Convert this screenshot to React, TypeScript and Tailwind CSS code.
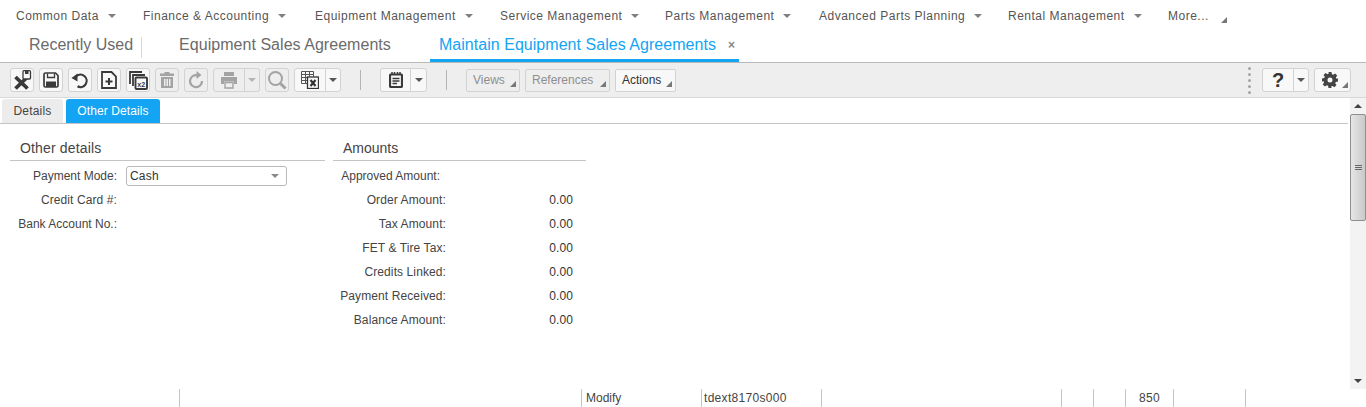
import React from "react";

const navItems = [
  { label: "Common Data", width: "w-[127px]" },
  { label: "Finance & Accounting", width: "w-[172px]" },
  { label: "Equipment Management", width: "w-[185px]" },
  { label: "Service Management", width: "w-[165px]" },
  { label: "Parts Management", width: "w-[154px]" },
  { label: "Advanced Parts Planning", width: "w-[189px]" },
  { label: "Rental Management", width: "w-[160px]" },
];

const amounts = [
  { label: "Order Amount:", value: "0.00" },
  { label: "Tax Amount:", value: "0.00" },
  { label: "FET & Tire Tax:", value: "0.00" },
  { label: "Credits Linked:", value: "0.00" },
  { label: "Payment Received:", value: "0.00" },
  { label: "Balance Amount:", value: "0.00" },
];

function Caret({ className = "border-t-[#8a8a8a]" }: { className?: string }) {
  return (
    <span
      className={`inline-block h-0 w-0 border-x-[4px] border-t-[4px] border-x-transparent ${className}`}
    />
  );
}

function Corner() {
  return (
    <svg width="6" height="6" viewBox="0 0 6 6" className="absolute bottom-[4px] right-[3px]">
      <path d="M6 0V6H0Z" fill="#777" />
    </svg>
  );
}

function ToolButton({
  children,
  disabled,
  width = "w-[24px]",
}: {
  children: React.ReactNode;
  disabled?: boolean;
  width?: string;
}) {
  return (
    <div
      className={`flex h-[24px] ${width} items-center justify-center rounded-[3px] border border-[#d2d2d2] ${
        disabled ? "bg-[#eeeeee] text-[#a3a3a3]" : "bg-[#f8f8f8] text-[#3a3a3a]"
      }`}
    >
      {children}
    </div>
  );
}

function SplitButton({
  children,
  disabled,
  mainWidth,
  width,
}: {
  children: React.ReactNode;
  disabled?: boolean;
  mainWidth: string;
  width: string;
}) {
  return (
    <div
      className={`flex h-[24px] ${width} rounded-[3px] border border-[#d2d2d2] ${
        disabled ? "bg-[#eeeeee] text-[#a3a3a3]" : "bg-[#f8f8f8] text-[#3a3a3a]"
      }`}
    >
      <div className={`flex ${mainWidth} items-center justify-center border-r border-[#d2d2d2]`}>
        {children}
      </div>
      <div className="flex flex-1 items-center justify-center">
        <Caret className={disabled ? "border-t-[#b4b4b4]" : "border-t-[#555555]"} />
      </div>
    </div>
  );
}

function MenuButton({
  label,
  width,
  disabled,
}: {
  label: string;
  width: string;
  disabled?: boolean;
}) {
  return (
    <div
      className={`relative flex h-[23px] ${width} items-center rounded-[2px] border border-[#d2d2d2] pl-[6px] text-[12px] ${
        disabled ? "bg-[#eeeeee] text-[#8e8e8e]" : "bg-[#f8f8f8] text-[#333333]"
      }`}
    >
      {label}
      <Corner />
    </div>
  );
}

function Row({ label, value }: { label: string; value: string }) {
  return (
    <div className="flex h-[24px] items-center text-[12px] tracking-[0.1px] text-[#444444]">
      <span className="w-[113px] text-right">{label}</span>
      <span className="w-[127px] text-right text-[#333333]">{value}</span>
    </div>
  );
}

function CloseSaveIcon() {
  return (
    <svg width="20" height="20" viewBox="0 0 20 20" fill="none">
      <path d="M3.500 7 15.500 18.500M15.500 7 3.500 18.500" stroke="currentColor" strokeWidth="3.800" />
      <rect x="11" y="0.700" width="7.500" height="8.300" rx="1" fill="#f8f8f8" stroke="currentColor" strokeWidth="1.300" />
      <path d="M13 1h3.500v3H13z" fill="currentColor" />
    </svg>
  );
}

function SaveIcon() {
  return (
    <svg width="16" height="16" viewBox="0 0 16 16" fill="none" stroke="currentColor">
      <path d="M2.500 1h10L15 3.500V13.500a1.500 1.500 0 0 1-1.500 1.500h-11A1.500 1.500 0 0 1 1 13.500v-11A1.500 1.500 0 0 1 2.500 1z" strokeWidth="1.700" />
      <path d="M4.500 1.500v4h7v-4" strokeWidth="1.300" />
      <path d="M3 9.500h10V15H3z" fill="currentColor" stroke="none" />
    </svg>
  );
}

function UndoIcon() {
  return (
    <svg width="18" height="18" viewBox="0 0 18 18" fill="none">
      <path d="M5 5.500a6.200 6.200 0 1 1 1.500 9.800" stroke="currentColor" strokeWidth="2.200" />
      <path d="M.5 7 6.500 2.500v8z" fill="currentColor" />
    </svg>
  );
}

function RedoIcon() {
  return (
    <svg width="18" height="18" viewBox="0 0 18 18" fill="none">
      <path d="M11 4.500A6 6 0 1 0 15 10" stroke="currentColor" strokeWidth="2.200" />
      <path d="M9.500 0v8l5-4z" fill="currentColor" />
    </svg>
  );
}

function NewIcon() {
  return (
    <svg width="16" height="18" viewBox="0 0 16 18" fill="none">
      <path d="M1 1h9.500L15 5.500V17H1z" stroke="currentColor" strokeWidth="1.800" />
      <path d="M7 7h2v2.500h2.500v2H9V14H7v-2.500H4.500v-2H7z" fill="currentColor" />
    </svg>
  );
}

function CopyIcon() {
  return (
    <svg width="19" height="19" viewBox="0 0 19 19" fill="none">
      <path d="M1 13V1H13" stroke="currentColor" strokeWidth="1.800" />
      <path d="M4 15V4H16" stroke="currentColor" strokeWidth="1.800" />
      <rect x="6.500" y="6.500" width="11.500" height="11.500" rx="1" stroke="currentColor" strokeWidth="1.900" />
      <text x="8.300" y="15.500" fontSize="7" fontWeight="700" fill="currentColor" fontFamily="Liberation Sans, sans-serif">
        x2
      </text>
    </svg>
  );
}

function TrashIcon() {
  return (
    <svg width="16" height="18" viewBox="0 0 16 18" fill="currentColor">
      <path d="M5.500 1h5v1.500H15V5H1V2.500h4.500z" />
      <path d="M2 6h12v11H2zM5 8v7h1.500V8zM7.500 8v7h1.500V8zM10 8v7h1.500V8z" fillRule="evenodd" />
    </svg>
  );
}

function PrintIcon() {
  return (
    <svg width="18" height="18" viewBox="0 0 18 18" fill="currentColor">
      <path d="M4 1h10v4H4z" />
      <path d="M1 6h16v7h-3v-2.500H4V13H1z" />
      <path d="M5 11.500h8V17H5z" fill="none" stroke="currentColor" strokeWidth="1.400" />
    </svg>
  );
}

function SearchIcon() {
  return (
    <svg width="20" height="20" viewBox="0 0 20 20" fill="none" stroke="currentColor">
      <circle cx="8.500" cy="8.500" r="6.500" strokeWidth="2" />
      <path d="M13.500 13.500 18.500 18.500" strokeWidth="3" />
    </svg>
  );
}

function ExcelIcon() {
  return (
    <svg width="18" height="18" viewBox="0 0 18 18" fill="none">
      <path
        d="M.5.500h12M.5 3.500h12M.5 6.500h6M.5 9.500h6M.5 12.500h6M.5.500v12M4.500.500v12M8.500.500v5M12.500.500v5"
        stroke="#555555"
        strokeWidth="1"
      />
      <rect x="6.500" y="6" width="11" height="11.500" fill="#f8f8f8" stroke="#333333" strokeWidth="1.300" />
      <path d="M9.500 9 14.500 15M14.500 9 9.500 15" stroke="#333333" strokeWidth="2.200" />
    </svg>
  );
}

function NotepadIcon() {
  return (
    <svg width="14" height="16" viewBox="0 0 14 16" fill="none">
      <rect x="1" y="2.500" width="12" height="12.500" rx="1" stroke="currentColor" strokeWidth="2.200" />
      <path d="M3 0v3M5.500 0v3M8.500 0v3M11 0v3" stroke="currentColor" strokeWidth="1.500" />
      <path d="M3.500 6.500h7M3.500 9h7M3.500 11.500h4.500" stroke="currentColor" strokeWidth="1.300" />
    </svg>
  );
}

function GearIcon() {
  return (
    <svg width="16" height="16" viewBox="0 0 16 16" fill="#444444">
      <path
        fillRule="evenodd"
        d="M6.500 0h3l.4 2.200 1.300.6L13.100 1.500l2.100 2.100-1.300 1.900.6 1.300L16 6.500v3l-2.200.4-.6 1.300 1.300 1.900-2.100 2.100-1.900-1.300-1.300.6L9.500 16h-3l-.4-2.200-1.300-.6-1.900 1.300L.8 12.400l1.300-1.900-.6-1.300L0 9.500v-3l2.200-.4.6-1.300L1.500 3 3.600.9l1.900 1.300 1.300-.6zM8 5.500a2.500 2.500 0 1 0 0 5 2.500 2.500 0 0 0 0-5z"
      />
    </svg>
  );
}

export default function App() {
  return (
    <div className="flex h-[407px] w-[1366px] flex-col overflow-hidden bg-white font-['Liberation_Sans',Arial,sans-serif]">
      {/* Main menu */}
      <div className="flex h-[32px] shrink-0 items-center pl-[16px] text-[12px] tracking-[0.5px] text-[#555555]">
        {navItems.map((item) => (
          <div key={item.label} className={`flex ${item.width} items-center`}>
            <span>{item.label}</span>
            <Caret className="ml-[9px] border-t-[#808080]" />
          </div>
        ))}
        <div className="relative w-[60px]">
          More...
          <svg width="6" height="6" viewBox="0 0 6 6" className="absolute bottom-[2px] right-[1px]">
            <path d="M6 0V6H0Z" fill="#777" />
          </svg>
        </div>
      </div>

      {/* Page tabs */}
      <div className="flex h-[30px] shrink-0 items-start pl-[29px] text-[16px] text-[#6b6b6b]">
        <span className="flex h-[26px] items-center">Recently Used</span>
        <span className="ml-[8px] mt-[5px] h-[21px] w-px bg-[#d8d8d8]" />
        <span className="ml-[37px] flex h-[26px] items-center tracking-[0.04px]">Equipment Sales Agreements</span>
        <div className="ml-[39px] flex h-[30px] w-[309px] items-start border-b-[3px] border-[#13a4f3] pl-[9px] text-[#13a4f3]">
          <span className="flex h-[26px] items-center tracking-[0.04px]">Maintain Equipment Sales Agreements</span>
          <span className="ml-[12px] flex h-[26px] items-center text-[12px] font-bold leading-none text-[#888888]">×</span>
        </div>
      </div>

      {/* Toolbar */}
      <div className="flex h-[36px] shrink-0 items-center border-y border-t-[#b9b9b9] border-b-[#d8d8d8] bg-[#eeeeee] pl-[10px] pr-[15px]">
        <div className="flex items-center gap-[5px]">
          <ToolButton><CloseSaveIcon /></ToolButton>
          <ToolButton><SaveIcon /></ToolButton>
          <ToolButton><UndoIcon /></ToolButton>
          <ToolButton><NewIcon /></ToolButton>
          <ToolButton><CopyIcon /></ToolButton>
          <ToolButton disabled><TrashIcon /></ToolButton>
          <ToolButton disabled><RedoIcon /></ToolButton>
          <SplitButton disabled width="w-[47px]" mainWidth="w-[31px]"><PrintIcon /></SplitButton>
          <ToolButton disabled><SearchIcon /></ToolButton>
          <SplitButton width="w-[47px]" mainWidth="w-[31px]"><ExcelIcon /></SplitButton>
        </div>
        <span className="ml-[19px] h-[20px] w-px bg-[#b5b5b5]" />
        <div className="ml-[19px]">
          <SplitButton width="w-[47px]" mainWidth="w-[30px]"><NotepadIcon /></SplitButton>
        </div>
        <span className="ml-[19px] h-[20px] w-px bg-[#b5b5b5]" />
        <div className="ml-[19px] flex items-center gap-[5px]">
          <MenuButton disabled label="Views" width="w-[54px]" />
          <MenuButton disabled label="References" width="w-[85px]" />
          <MenuButton label="Actions" width="w-[61px]" />
        </div>
        <div className="ml-auto flex items-center">
          <div className="flex flex-col gap-[3px]">
            {[0, 1, 2, 3, 4].map((n) => (
              <span key={n} className="h-[3px] w-[3px] rounded-full bg-[#a5a5a5]" />
            ))}
          </div>
          <div className="ml-[11px]">
            <SplitButton width="w-[47px]" mainWidth="w-[31px]">
              <span className="text-[20px] font-bold leading-none text-[#333333]">?</span>
            </SplitButton>
          </div>
          <div className="relative ml-[5px]">
            <ToolButton width="w-[37px]">
              <span className="mr-[6px] flex"><GearIcon /></span>
            </ToolButton>
            <Corner />
          </div>
        </div>
      </div>

      {/* Body with scrollbar */}
      <div className="flex min-h-0 flex-1">
        <div className="mr-[2px] min-w-0 flex-1">
          <div className="flex h-[26px] items-end gap-[3px] border-b border-[#c4c4c4] pl-[2px] text-[12px]">
            <div className="flex h-[24px] w-[61px] items-center justify-center rounded-t-[3px] bg-[#ececec] tracking-[0.2px] text-[#444444]">
              Details
            </div>
            <div className="flex h-[24px] w-[94px] items-center justify-center rounded-t-[3px] bg-[#13a4f3] tracking-[0.1px] text-white">
              Other Details
            </div>
          </div>

          <div className="flex gap-[8px] pl-[10px] pt-[8px]">
            <section className="w-[315px]">
              <h2 className="flex h-[29px] items-end border-b border-[#c4c4c4] pb-[1px] pl-[10px] text-[14px] font-normal tracking-[0.15px] text-[#444444]">
                Other details
              </h2>
              <div className="pt-[3px] text-[12px] text-[#444444]">
                <div className="flex h-[24px] items-center">
                  <span className="w-[107px] text-right">Payment Mode:</span>
                  <div className="ml-[9px] flex h-[20px] w-[161px] items-center justify-between rounded-[3px] border border-[#b9b9b9] bg-white pl-[3px] pr-[7px] tracking-[0.2px] text-[#333333]">
                    Cash
                    <Caret />
                  </div>
                </div>
                <div className="flex h-[24px] items-center">
                  <span className="w-[107px] text-right tracking-[0.1px]">Credit Card #:</span>
                </div>
                <div className="flex h-[24px] items-center">
                  <span className="w-[107px] text-right">Bank Account No.:</span>
                </div>
              </div>
            </section>

            <section className="w-[253px]">
              <h2 className="flex h-[29px] items-end border-b border-[#c4c4c4] pb-[1px] pl-[10px] text-[14px] font-normal text-[#444444]">
                Amounts
              </h2>
              <div className="pt-[3px]">
                <div className="flex h-[24px] items-center text-[12px] text-[#444444]">
                  <span className="w-[107px] text-right">Approved Amount:</span>
                </div>
                {amounts.map((row) => (
                  <Row key={row.label} label={row.label} value={row.value} />
                ))}
              </div>
            </section>
          </div>
        </div>

        {/* Scrollbar */}
        <div className="flex w-[16px] shrink-0 flex-col bg-[#f3f3f3]">
          <div className="flex h-[16px] items-center justify-center">
            <span className="h-0 w-0 border-x-[4px] border-b-[4px] border-x-transparent border-b-[#444444]" />
          </div>
          <div className="flex h-[107px] flex-col items-center justify-center gap-[1px] rounded-[2px] border border-[#8f8f8f] bg-gradient-to-r from-[#e6e6e6] to-[#c9c9c9]">
            <span className="h-px w-[7px] bg-[#666666]" />
            <span className="h-px w-[7px] bg-[#666666]" />
            <span className="h-px w-[7px] bg-[#666666]" />
          </div>
          <div className="flex-1" />
          <div className="flex h-[16px] items-center justify-center">
            <Caret className="border-t-[#444444]" />
          </div>
        </div>
      </div>

      {/* Status bar */}
      <div className="flex h-[18px] shrink-0 items-center text-[12px] text-[#444444]">
        <span className="h-full w-[180px] border-r border-[#c4c4c4]" />
        <span className="h-full w-[402px] border-r border-[#c4c4c4]" />
        <span className="flex h-full w-[120px] items-center border-r border-[#c4c4c4] pl-[4px]">Modify</span>
        <span className="flex h-full w-[120px] items-center border-r border-[#c4c4c4] pl-[2px] tracking-[0.3px]">tdext8170s000</span>
        <span className="h-full w-[240px] border-r border-[#c4c4c4]" />
        <span className="h-full w-[32px] border-r border-[#c4c4c4]" />
        <span className="h-full w-[32px] border-r border-[#c4c4c4]" />
        <span className="flex h-full w-[48px] items-center border-r border-[#c4c4c4] pl-[13px] tracking-[0.3px]">850</span>
        <span className="h-full w-[72px] border-r border-[#c4c4c4]" />
      </div>
    </div>
  );
}
